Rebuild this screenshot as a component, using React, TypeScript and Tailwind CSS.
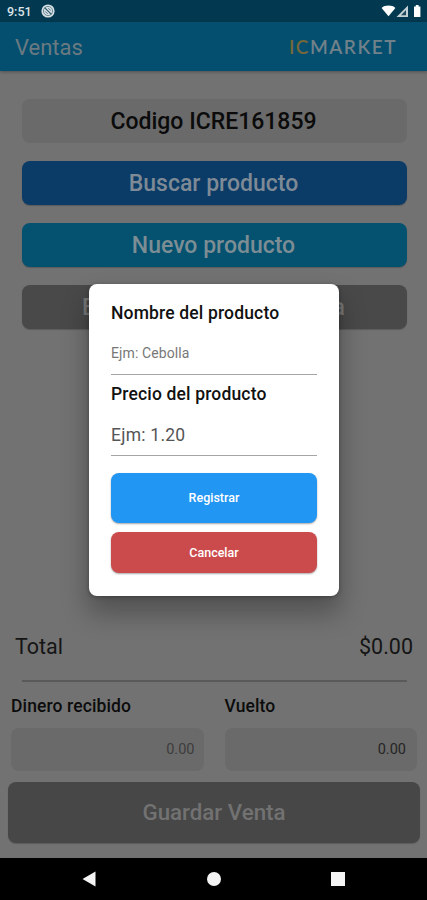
import type { ReactNode } from "react";

type ActionButtonProps = {
  className: string;
  children: ReactNode;
};

function ActionButton({ className, children }: ActionButtonProps) {
  return (
    <button
      className={`flex h-[44px] w-full items-center rounded-lg pt-[2px] text-[23px] font-medium whitespace-nowrap shadow-[0_1px_1px_rgba(0,0,0,0.2)] ${className}`}
    >
      {children}
    </button>
  );
}

function StatusBar() {
  return (
    <div className="flex h-[22px] items-center justify-between bg-[#033950] pr-[5px] pl-[7px]">
      <div className="flex items-center gap-[9px]">
        <span className="pt-[2px] text-[12.5px] font-medium text-[#dce4e8]">9:51</span>
        <svg width="14" height="14" viewBox="0 0 14 14">
          <circle cx="7" cy="7" r="6.6" fill="#d5dfe4" />
          <circle cx="7" cy="7" r="4.6" fill="none" stroke="#5f8291" strokeWidth="0.9" />
          <path d="M3.6 3.6l6.8 6.8" stroke="#31596b" strokeWidth="1.3" />
          <path d="M7.4 4.2l2.4 2.4M4.2 7.4l2.4 2.4" stroke="#4c7080" strokeWidth="1" />
        </svg>
      </div>
      <svg width="42" height="14" viewBox="0 0 42 14">
        <path d="M1.6 4C5 0.8 12 0.8 15.4 4L8.5 12.3z" fill="#fff" />
        <path d="M16.5 13L28 1.5V13z" fill="#c3d0d6" />
        <path d="M21 11.2l5-5.2v5.2z" fill="#20495c" />
        <path d="M34 2.5h1.8V1h2.8v1.5h1.8V13H34z" fill="#fff" />
      </svg>
    </div>
  );
}

function Header() {
  return (
    <header className="flex h-[49px] items-center justify-between bg-[#044f6f] pr-[30px] pl-[15px] shadow-[0_1px_3px_rgba(0,0,0,0.3)]">
      <h1 className="pt-px text-[22px] text-[#6b7a81]">Ventas</h1>
      <span className="pt-[2px] font-[Lato] text-[19px] font-semibold tracking-[1.5px] text-[#71818a]">
        <span className="text-[#74683a]">IC</span>MARKET
      </span>
    </header>
  );
}

function ProductDialog() {
  return (
    <div className="absolute top-[284px] left-[89px] flex h-[312px] w-[250px] flex-col rounded-lg bg-white px-[22px] pt-[17px] shadow-[0_16px_26px_2px_rgba(0,0,0,0.28),0_1px_4px_rgba(0,0,0,0.3)]">
      <label className="h-[24px] text-[17.5px] leading-[24px] font-medium tracking-[0.16px] text-[#111]">
        Nombre del producto
      </label>
      <div className="flex h-[50px] items-center border-b border-[#a5a5a5] pt-[7px] text-[14px] tracking-[0.1px] text-[#777]">
        Ejm: Cebolla
      </div>
      <label className="mt-[7px] h-[24px] text-[17.5px] leading-[24px] font-medium tracking-[0.16px] text-[#111]">
        Precio del producto
      </label>
      <div className="flex h-[50px] items-center border-b border-[#a5a5a5] pt-[9px] text-[17.5px] tracking-[0.25px] text-[#555]">
        Ejm: 1.20
      </div>
      <button className="mt-[17px] h-[50px] shrink-0 rounded-lg bg-[#2196f3] text-[12.5px] font-medium text-white shadow-[0_1px_2px_rgba(0,0,0,0.35)]">
        Registrar
      </button>
      <button className="mt-[9px] h-[41px] shrink-0 rounded-lg bg-[#cb4b4c] pt-px text-[12.5px] font-medium text-white shadow-[0_1px_2px_rgba(0,0,0,0.35)]">
        Cancelar
      </button>
    </div>
  );
}

function NavigationBar() {
  return (
    <div className="flex h-[42px] items-center justify-between bg-black pr-[82px] pl-[82px]">
      <svg width="14" height="16" viewBox="0 0 14 16">
        <path d="M0.5 8L13.5 0.5v15z" fill="#f4f4f4" />
      </svg>
      <div className="size-[14px] rounded-full bg-[#f4f4f4]" />
      <div className="size-[14px] bg-[#f4f4f4]" />
    </div>
  );
}

export default function App() {
  return (
    <div className="relative flex h-[900px] w-[427px] flex-col overflow-hidden bg-[#727272] font-[Roboto,sans-serif]">
      <StatusBar />
      <Header />

      <main className="flex flex-1 flex-col">
        <div className="flex flex-col gap-[18px] pt-[28px] pr-[20px] pl-[22px]">
          <div className="flex h-[44px] items-center justify-center rounded-lg bg-[#6a6a6a] pt-[2px] pr-[2px] text-[23px] font-medium text-[#0b0b0b]">
            Codigo ICRE161859
          </div>
          <ActionButton className="justify-center bg-[#0b3b67] pr-[2px] text-[#7e8a95]">
            Buscar producto
          </ActionButton>
          <ActionButton className="justify-center bg-[#045170] pr-[2px] text-[#7d8d94]">
            Nuevo producto
          </ActionButton>
          {/* only the ends of this label show beside the dialog */}
          <ActionButton className="justify-between bg-[#494949] pr-[62px] pl-[60px] text-[#777]">
            <span>E</span>
            <span>a</span>
          </ActionButton>
        </div>

        <div className="mt-auto">
          <div className="flex items-center justify-between pr-[14px] pl-[15px] text-[21.5px] leading-[26px] text-[#151515]">
            <span>Total</span>
            <span>$0.00</span>
          </div>
          <div className="mr-[20px] ml-[22px] mt-[20px] h-[2px] bg-[#5a5a5a]" />

          <div className="mt-[13px] grid grid-cols-2 gap-[21px] pr-[10px] pl-[11px]">
            <div>
              <p className="text-[17.5px] leading-[22px] font-medium tracking-[0.12px] text-[#0c0c0c]">Dinero recibido</p>
              <div className="mt-[11px] flex h-[43px] items-center justify-end rounded-lg bg-[#6a6a6a] pt-px pr-[9px] text-[14.5px] text-[#3d3d3d]">
                0.00
              </div>
            </div>
            <div>
              <p className="text-[17.5px] leading-[22px] font-medium tracking-[0.12px] text-[#0c0c0c]">Vuelto</p>
              <div className="mt-[11px] flex h-[43px] items-center justify-end rounded-lg bg-[#6a6a6a] pt-px pr-[11px] text-[14.5px] text-[#252525]">
                0.00
              </div>
            </div>
          </div>

          <div className="mt-[11px] mb-[15px] pr-[7px] pl-[8px]">
            <button className="h-[61px] w-full rounded-lg bg-[#474747] pt-px text-[22.3px] font-medium text-[#727272] shadow-[0_1px_1px_rgba(0,0,0,0.2)]">
              Guardar Venta
            </button>
          </div>
        </div>
      </main>

      <NavigationBar />
      <ProductDialog />
    </div>
  );
}
